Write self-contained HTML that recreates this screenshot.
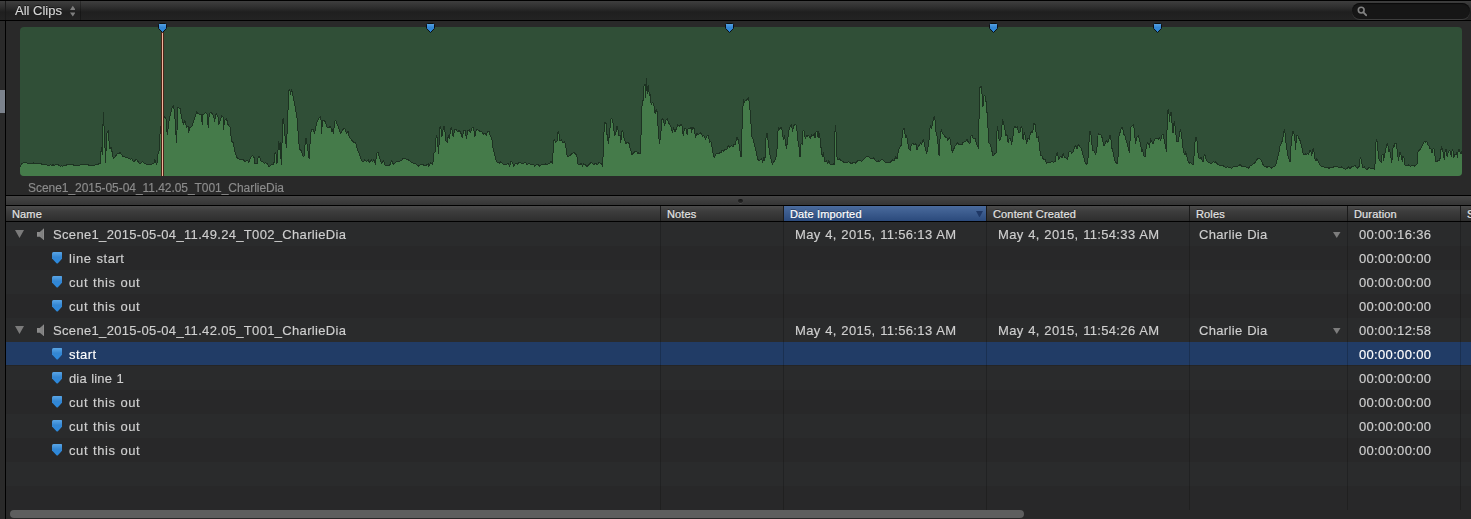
<!DOCTYPE html>
<html lang="en">
<head>
<meta charset="utf-8">
<title>All Clips</title>
<style>
html,body{margin:0;padding:0;background:#262626;}
body{width:1471px;height:519px;overflow:hidden;font-family:"Liberation Sans",sans-serif;}
#app{position:relative;width:1471px;height:519px;overflow:hidden;background:#262626;}
#app div, #app span, #app svg{position:absolute;box-sizing:border-box;}
#topbar{left:0;top:0;width:1471px;height:21px;background:#000;}
#tb-grad{left:0;top:1px;width:1471px;height:19px;background:linear-gradient(#3e3e3e 0%,#313131 28%,#232323 52%,#1f1f1f 58%,#232323 100%);}
#tb-left{left:5px;top:1px;width:1px;height:19px;background:#1a1a1a;}
#filter{left:6px;top:1px;width:75px;height:19px;border-right:1px solid rgba(0,0,0,.28);}
#filter-label{left:9px;top:2px;will-change:transform;-webkit-text-stroke:0.15px #d6d6d6;font-size:13px;line-height:15px;color:#d6d6d6;white-space:nowrap;text-shadow:0 -1px 0 rgba(0,0,0,.6);}
#updown{left:63.7px;top:4px;}
#search{left:1352px;top:3px;width:118px;height:16px;border-radius:8px;background:#161616;box-shadow:0 1px 0 rgba(255,255,255,.12), inset 0 1px 1px rgba(0,0,0,.6);}
#search svg{left:5px;top:3px;}
#leftstrip{left:0;top:21px;width:6px;height:498px;background:#2a2a2a;border-right:1px solid #000;}
#leftthumb{left:0;top:69px;width:5px;height:23px;background:#7b828c;}
#filmstrip{left:0;top:21px;width:1471px;height:174px;background:#292929;}
#clip{left:20px;top:6px;width:1442px;height:149px;background:#304f37;border-radius:4px;overflow:hidden;}
#clip svg{left:0;top:0;}
#playhead{left:161px;top:10px;width:3px;height:145px;background:#f2b39c;border-left:1px solid #4a2618;border-right:1px solid #4a2618;}
#cliplabel{will-change:transform;left:28px;top:160px;font-size:12px;line-height:14px;color:#8c8c8c;-webkit-text-stroke:0.15px #8c8c8c;white-space:nowrap;letter-spacing:-0.05px;}
.tm{top:2px;}
#splitter{left:6px;top:195px;width:1465px;height:11px;background:linear-gradient(#464646,#353535);border-top:1px solid #000;border-bottom:1px solid #000;}
#grip{left:732px;top:2.5px;width:4.6px;height:4.6px;border-radius:50%;background:linear-gradient(#141414,#2a2a2a);box-shadow:0 0.5px 0 rgba(255,255,255,.18);}
#header{left:0;top:206px;width:1471px;height:16px;background:linear-gradient(#4b4b4b 0%,#3d3d3d 35%,#2e2e2e 100%);border-bottom:1px solid #000;}
#header .hc{top:0;height:15px;border-left:1px solid #1b1b1b;}
#header .hc span{left:6px;top:2px;font-size:11px;line-height:13px;color:#e4e4e4;white-space:nowrap;text-shadow:0 -1px 0 rgba(0,0,0,.35);letter-spacing:0.15px;-webkit-text-stroke:0.2px #e4e4e4;}
#header .hsel{background:linear-gradient(#4a6b9d,#2b4a7c);}
#header .hsel span{color:#fff;-webkit-text-stroke-color:#fff;}
#sort{left:192px;top:4.5px;}
#list{left:0;top:222px;width:1471px;height:288px;}
.row{left:0;width:1471px;height:24px;}
.row.even{background:#2a2b2c;}
.row.odd{background:#282829;}
.row.sel{background:linear-gradient(#213c66,#213c66) no-repeat 0 0/100% 23px, #252525;}
.row span{top:5px;font-size:13px;line-height:16px;color:#cfcfcf;white-space:nowrap;letter-spacing:0.33px;word-spacing:0.7px;will-change:transform;-webkit-text-stroke:0.15px #cfcfcf;}
.row.sel span{color:#fff;-webkit-text-stroke-color:#fff;}
.tri{left:15px;top:8px;}
.spk{left:36.8px;top:5.7px;}
.mk{left:51.8px;top:6px;}
.clipnm{left:53px;}
.marknm{left:69.4px;}
.row .date{left:795px;}
.row .created{left:998px;}
.row .role{left:1199px;}
.row .dur{left:1359px;}
.dd{left:1333px;top:10px;width:7.5px;height:6px;}
.vl{top:0;width:1px;height:288px;background:rgba(0,0,0,.2);}
#hscroll{left:6px;top:510px;width:1465px;height:9px;background:#282828;}
#hthumb{left:4px;top:0;width:1014px;height:8px;border-radius:4px;background:#5e5e5e;}

</style>
</head>
<body>
<svg width="0" height="0" style="position:absolute"><defs>
<linearGradient id="mkg" x1="0" y1="0" x2="0" y2="1"><stop offset="0" stop-color="#5aa6e6"/><stop offset="0.45" stop-color="#3486d2"/><stop offset="1" stop-color="#2a8ae0"/></linearGradient>
<linearGradient id="spg" x1="0" y1="0" x2="1" y2="0"><stop offset="0" stop-color="#8e8e8e"/><stop offset="0.8" stop-color="#7e7e7e"/><stop offset="1" stop-color="#a0a0a0"/></linearGradient>
</defs></svg>
<div id="app">
  <div id="topbar">
    <div id="tb-grad"></div>
    <div id="tb-left"></div>
    <div id="filter"><span id="filter-label">All Clips</span>
      <svg id="updown" width="5.6" height="12" viewBox="0 0 5.6 12"><path d="M2.8 0.8 L5.6 5 H0 Z M0 7.4 H5.6 L2.8 11.6 Z" fill="#7e7e7e"/></svg>
    </div>
    <div id="search">
      <svg width="11" height="11" viewBox="0 0 11 11"><circle cx="4.2" cy="4.1" r="2.9" fill="none" stroke="#828282" stroke-width="1.6"/><path d="M6.4 6.4 L9.1 9.2" stroke="#828282" stroke-width="1.9" stroke-linecap="round"/></svg>
    </div>
  </div>
    <div id="filmstrip">
    <div id="clip">
<svg id="wave" width="1442" height="149" viewBox="0 0 1442 149"><path d="M0 149 L0 139.6 L0.0 139.6 L1.5 136.7 L3.0 135.9 L4.4 135.2 L5.8 135.1 L7.7 136.7 L8.9 136.9 L10.0 136.1 L11.2 136.7 L12.3 136.5 L13.5 136.0 L14.6 136.7 L15.8 136.0 L17.0 136.6 L18.1 136.1 L19.3 136.7 L20.4 136.4 L21.6 137.1 L22.7 137.9 L23.9 137.2 L25.0 138.0 L26.2 137.6 L27.3 138.2 L28.4 138.6 L29.5 138.1 L30.7 137.9 L31.8 138.7 L32.9 137.4 L34.0 138.5 L35.2 137.7 L36.3 137.5 L37.4 137.5 L38.5 138.0 L40.5 139.2 L41.6 138.7 L42.7 139.2 L43.8 138.1 L44.9 138.4 L46.0 138.3 L47.1 137.7 L48.2 137.6 L49.4 137.8 L50.6 137.3 L51.8 137.4 L53.0 137.7 L54.2 138.5 L55.4 138.3 L56.6 138.2 L57.8 138.6 L59.0 138.4 L60.1 138.0 L61.3 137.5 L62.4 137.9 L63.6 137.2 L64.8 137.7 L66.0 137.2 L67.2 137.8 L68.4 137.9 L69.6 138.5 L70.8 138.4 L72.0 138.0 L73.2 138.4 L74.4 138.7 L75.5 137.2 L76.7 137.2 L77.8 137.4 L79.0 136.7 L80.2 136.7 L81.3 120.3 L82.5 128.0 L83.2 85.6 L84.8 112.6 L85.4 135.7 L87.1 104.9 L88.2 103.5 L89.6 121.3 L91.3 120.7 L93.4 131.9 L96.3 128.0 L97.6 126.7 L98.9 126.3 L100.2 125.5 L103.1 129.9 L104.3 129.5 L105.5 130.6 L106.7 131.0 L107.9 130.9 L109.2 131.3 L110.5 132.1 L111.8 131.9 L113.7 134.7 L115.1 133.3 L116.6 132.4 L119.5 136.7 L120.9 136.0 L122.4 134.7 L123.6 135.6 L124.8 136.3 L126.0 136.8 L127.2 137.6 L128.3 137.9 L129.4 137.9 L130.5 137.1 L131.7 137.2 L132.8 136.2 L133.9 136.7 L134.9 132.8 L136.8 137.6 L138.3 125.1 L139.3 123.2 L140.3 100.1 L141.2 99.5 L144.5 89.5 L145.9 90.4 L147.2 107.8 L149.3 92.4 L152.2 79.8 L153.6 78.9 L154.7 87.5 L156.5 115.5 L158.0 79.8 L159.2 81.1 L160.3 81.8 L161.5 90.4 L163.4 97.2 L164.9 93.3 L166.5 100.1 L168.0 99.1 L168.8 105.3 L169.6 100.1 L170.7 100.0 L171.9 99.5 L174.4 91.4 L176.9 84.6 L178.0 86.5 L179.2 87.0 L181.1 87.5 L182.3 97.2 L183.0 87.5 L184.2 86.8 L185.4 85.2 L187.3 87.5 L188.2 101.0 L189.2 87.5 L190.8 85.2 L192.2 86.6 L193.6 88.5 L194.6 94.3 L196.1 86.6 L198.1 90.4 L198.8 97.2 L200.0 94.3 L201.9 88.5 L203.1 90.4 L203.5 102.9 L204.6 93.3 L206.7 91.8 L207.7 97.2 L210.0 100.1 L211.6 114.5 L213.1 115.5 L215.4 127.0 L217.7 131.9 L218.9 132.0 L220.0 132.7 L221.2 132.8 L223.1 132.2 L225.0 134.7 L227.0 132.8 L228.9 135.3 L230.4 130.9 L232.4 128.4 L233.9 129.5 L234.7 136.7 L235.8 136.0 L237.0 136.7 L238.2 129.5 L239.7 129.9 L240.8 133.8 L242.0 134.5 L243.2 134.9 L244.3 136.1 L245.8 135.8 L247.2 136.7 L249.1 139.9 L250.4 138.2 L251.6 137.6 L252.8 137.5 L253.9 136.7 L255.1 125.1 L255.9 126.1 L257.0 136.7 L258.6 114.5 L259.3 122.2 L260.1 115.5 L261.3 137.6 L262.8 92.4 L263.6 91.4 L264.7 106.8 L266.5 120.3 L267.8 87.5 L269.0 63.5 L269.7 62.5 L270.7 67.3 L271.5 62.5 L272.4 65.4 L275.1 79.8 L277.1 91.4 L279.4 122.2 L280.9 123.2 L282.9 129.0 L284.4 129.0 L285.4 111.6 L286.3 111.0 L287.7 122.2 L289.2 131.9 L290.6 106.8 L291.7 102.0 L293.3 102.0 L294.4 106.8 L296.3 97.2 L298.3 91.8 L300.2 89.5 L301.0 92.4 L301.5 106.8 L302.5 93.7 L303.8 93.5 L305.0 94.3 L307.1 100.1 L308.9 100.6 L310.6 99.1 L311.8 104.9 L312.5 102.9 L313.3 106.8 L314.8 94.3 L316.0 93.7 L317.9 99.1 L320.6 106.8 L323.3 102.0 L324.9 101.4 L326.4 106.8 L327.9 103.9 L329.5 110.7 L330.6 111.6 L331.8 113.1 L332.9 114.5 L334.3 115.5 L335.6 115.5 L337.2 122.2 L339.1 126.1 L341.6 133.8 L343.5 134.7 L344.9 132.8 L346.4 134.7 L348.4 132.8 L349.5 135.7 L351.3 132.8 L352.6 134.7 L353.6 132.2 L355.3 137.2 L356.8 126.1 L358.0 125.1 L359.5 130.9 L361.5 136.7 L363.4 133.4 L365.3 138.6 L366.7 138.0 L368.1 138.5 L369.6 138.6 L371.5 133.4 L373.4 137.2 L374.9 136.1 L376.3 134.7 L378.2 134.7 L379.4 134.6 L380.5 133.9 L381.7 133.3 L382.9 131.8 L384.0 131.5 L385.5 131.7 L386.9 132.2 L388.3 132.8 L389.8 133.8 L391.2 135.3 L392.7 135.7 L393.8 136.8 L395.0 136.7 L396.5 137.4 L398.1 139.2 L400.0 138.0 L401.2 137.7 L402.3 137.9 L403.5 138.0 L404.6 138.5 L405.8 138.6 L406.9 137.8 L408.1 136.7 L408.7 139.6 L410.6 135.3 L412.7 138.0 L413.9 126.1 L415.0 125.1 L416.2 108.7 L417.3 110.7 L418.5 127.0 L420.0 100.1 L420.8 99.5 L421.8 109.7 L423.5 100.1 L424.5 99.5 L425.8 113.5 L427.4 115.5 L428.1 108.7 L429.3 111.6 L430.8 101.4 L431.6 101.0 L433.1 109.7 L434.7 102.9 L436.2 102.6 L437.8 104.9 L439.3 103.3 L440.8 105.8 L442.4 110.7 L443.5 103.9 L445.1 103.3 L446.4 111.6 L447.8 103.9 L449.3 102.9 L450.5 105.8 L452.0 100.6 L453.6 101.0 L454.9 109.7 L456.3 102.0 L457.8 102.9 L459.0 103.6 L460.1 104.9 L461.7 104.9 L463.6 107.2 L465.1 106.4 L466.3 108.7 L467.4 104.9 L469.0 104.5 L470.5 109.1 L471.7 110.7 L472.8 120.3 L474.4 126.1 L475.9 132.8 L477.5 135.7 L479.4 136.1 L480.9 134.7 L482.9 136.7 L484.8 138.0 L486.7 137.2 L488.6 136.7 L489.6 139.6 L490.9 134.7 L492.5 135.3 L493.8 139.2 L495.4 136.1 L497.3 137.2 L498.7 135.8 L500.2 135.7 L501.6 136.4 L503.1 137.2 L505.0 134.7 L506.9 137.6 L508.9 136.7 L510.3 137.2 L511.8 138.0 L513.7 137.2 L514.8 139.6 L516.4 137.2 L518.5 137.6 L519.5 139.6 L521.4 137.2 L523.3 138.0 L525.2 136.9 L527.2 138.0 L528.7 136.1 L529.9 136.7 L531.0 133.8 L532.6 136.7 L533.5 114.5 L534.5 112.6 L535.6 115.5 L537.2 113.5 L538.0 104.9 L538.7 104.5 L539.9 113.5 L541.4 112.6 L543.0 115.5 L544.5 114.9 L545.7 118.4 L547.2 129.9 L549.3 129.0 L550.7 128.0 L552.2 126.5 L554.1 125.7 L556.1 127.6 L557.0 129.9 L558.0 137.2 L559.9 138.0 L561.1 136.1 L562.6 139.2 L563.8 136.7 L565.3 137.6 L566.9 139.9 L569.6 136.7 L571.5 135.3 L573.4 137.6 L574.6 137.0 L575.7 136.1 L577.3 137.6 L579.2 135.3 L581.1 136.7 L582.7 139.2 L583.8 106.8 L585.0 94.9 L585.9 95.2 L587.3 110.7 L588.4 116.4 L589.6 104.9 L590.8 92.4 L591.9 91.4 L593.1 96.2 L594.6 108.7 L595.8 106.8 L596.9 99.5 L597.7 100.1 L598.8 108.7 L600.0 107.8 L600.8 115.5 L601.9 103.9 L602.7 103.3 L603.9 110.7 L605.8 116.4 L607.3 115.5 L608.9 116.1 L610.4 122.2 L611.9 127.6 L613.5 126.1 L615.4 124.1 L617.0 125.1 L617.7 127.0 L618.9 125.7 L620.4 127.0 L621.2 102.9 L622.2 73.1 L623.1 74.0 L624.1 57.7 L625.0 57.1 L625.8 70.2 L626.4 51.9 L627.2 60.6 L627.6 66.3 L628.5 59.0 L629.3 68.3 L630.1 67.3 L631.2 77.9 L632.4 75.0 L633.9 77.9 L635.1 86.6 L636.2 82.1 L637.4 85.6 L638.5 108.7 L639.7 116.1 L640.8 106.8 L642.0 92.4 L642.8 91.4 L644.7 98.1 L646.2 92.4 L647.4 91.8 L648.9 96.2 L650.9 99.5 L652.4 105.8 L653.6 100.6 L655.1 104.9 L656.6 101.0 L657.8 97.6 L659.3 99.5 L660.9 97.2 L662.0 98.7 L663.2 108.3 L664.4 102.0 L665.9 101.0 L667.1 107.8 L668.2 101.0 L669.7 101.4 L671.3 100.6 L671.7 105.8 L672.4 100.1 L674.4 102.0 L675.5 111.0 L676.7 106.4 L678.2 107.8 L679.8 106.4 L680.9 105.8 L682.5 109.1 L684.0 108.7 L685.5 112.6 L687.1 108.7 L688.2 108.3 L689.8 115.5 L690.9 114.1 L692.1 120.3 L693.3 128.0 L694.4 130.9 L696.0 127.0 L697.5 126.1 L698.7 127.0 L699.8 125.1 L701.0 126.1 L702.1 123.2 L703.7 124.1 L705.2 122.2 L706.7 122.6 L708.3 118.7 L709.8 120.3 L711.4 118.7 L712.9 119.9 L714.1 117.4 L715.2 118.0 L716.8 110.7 L717.5 110.3 L718.7 115.5 L719.8 122.2 L721.0 130.3 L722.2 97.2 L723.3 72.1 L724.5 75.0 L725.2 73.1 L726.4 74.0 L727.6 71.2 L728.7 70.6 L729.9 81.8 L731.0 97.2 L731.8 109.7 L732.9 111.6 L734.5 117.4 L736.0 124.1 L737.6 132.2 L739.1 133.8 L740.7 132.2 L741.8 131.5 L742.6 135.7 L743.7 130.9 L744.9 133.4 L745.7 114.5 L746.4 106.4 L747.2 106.8 L748.4 115.5 L749.5 126.1 L751.1 132.2 L752.2 137.2 L753.8 134.7 L755.3 132.8 L756.8 127.0 L757.6 106.8 L758.4 100.6 L759.5 102.0 L761.1 100.6 L762.2 103.9 L763.4 112.6 L764.5 108.7 L765.7 117.4 L766.5 121.8 L767.6 112.6 L769.2 102.0 L770.3 99.5 L771.5 97.2 L772.6 104.9 L773.4 99.1 L775.0 97.6 L776.5 98.1 L777.6 111.6 L778.8 118.4 L780.0 129.9 L781.1 116.4 L782.3 117.4 L783.0 103.9 L783.8 103.3 L785.0 109.7 L785.7 111.6 L786.5 108.3 L787.7 109.2 L788.8 108.7 L790.4 111.6 L791.5 107.8 L793.1 108.7 L794.2 106.8 L795.0 111.0 L796.1 104.5 L797.3 104.9 L798.1 110.3 L798.8 104.9 L800.0 110.7 L801.2 122.2 L802.3 129.9 L803.5 125.1 L804.6 134.7 L806.2 133.8 L807.7 136.1 L808.9 133.8 L810.0 137.2 L811.6 138.0 L813.1 136.7 L814.3 137.6 L814.8 106.8 L815.4 98.7 L816.2 106.8 L817.0 129.9 L818.1 132.8 L819.3 131.9 L821.2 133.8 L823.1 134.7 L825.0 136.1 L827.0 135.3 L828.9 134.7 L830.8 136.1 L832.0 136.2 L833.1 135.7 L834.3 135.9 L835.5 136.1 L836.6 135.1 L837.8 133.8 L839.7 133.4 L841.6 134.2 L843.5 132.2 L844.7 131.3 L845.9 129.9 L847.8 129.0 L849.7 130.9 L851.6 131.9 L853.6 130.9 L855.1 132.8 L856.6 134.7 L858.2 133.8 L859.7 134.7 L860.9 132.9 L862.0 132.2 L864.0 133.8 L865.1 135.1 L866.3 135.3 L867.4 135.7 L868.6 135.3 L869.7 135.6 L870.9 134.7 L872.8 132.8 L874.4 133.4 L875.5 129.9 L877.1 131.9 L878.2 125.1 L879.4 120.3 L880.9 119.3 L882.1 110.7 L883.2 101.0 L884.4 102.0 L885.5 110.3 L886.7 108.7 L887.9 116.4 L889.0 122.2 L890.2 123.2 L891.3 117.4 L892.9 116.8 L894.4 117.4 L896.0 116.8 L897.1 123.2 L898.3 119.3 L899.4 118.4 L900.6 115.5 L901.7 117.4 L903.3 112.2 L904.4 116.4 L905.6 123.2 L906.7 126.5 L907.9 120.3 L909.1 112.6 L910.2 98.7 L911.4 102.0 L912.5 97.2 L913.7 90.4 L914.8 89.5 L915.6 102.9 L916.8 107.8 L917.9 115.5 L919.1 129.0 L920.2 108.7 L921.4 102.0 L922.5 106.8 L924.1 107.8 L925.6 110.7 L926.8 110.3 L927.9 113.5 L929.1 110.7 L930.3 112.6 L931.4 121.3 L932.6 125.7 L933.7 122.2 L934.9 119.3 L936.4 117.4 L937.6 115.5 L938.7 118.0 L940.3 117.4 L941.8 118.0 L943.0 115.5 L944.5 114.9 L946.1 114.1 L947.2 112.2 L948.4 115.5 L949.9 116.4 L951.1 108.3 L952.2 108.7 L953.4 111.6 L954.9 111.0 L956.1 115.5 L957.2 118.4 L958.4 121.3 L959.2 83.7 L959.9 60.6 L961.1 59.6 L961.8 64.4 L963.0 79.8 L963.8 69.2 L964.9 68.3 L966.1 75.0 L966.9 85.6 L967.6 85.2 L968.4 115.5 L969.9 116.4 L971.5 122.2 L973.0 129.0 L974.6 127.0 L976.1 126.1 L976.9 104.9 L977.6 99.5 L978.4 106.8 L979.2 113.5 L980.7 112.6 L981.5 106.8 L982.3 92.9 L983.4 95.2 L984.6 100.1 L985.7 108.7 L986.9 107.8 L988.1 115.5 L989.2 111.0 L990.8 112.2 L991.5 117.4 L992.7 111.6 L993.8 101.0 L995.0 99.5 L996.1 100.6 L997.3 99.5 L998.5 105.8 L1000.0 104.9 L1001.2 99.1 L1001.9 99.5 L1003.1 112.6 L1004.2 105.8 L1005.4 108.7 L1006.6 116.4 L1007.7 111.6 L1009.2 112.2 L1010.4 105.8 L1011.6 104.9 L1012.7 105.8 L1013.9 96.8 L1015.0 97.2 L1016.2 106.8 L1017.0 110.7 L1018.1 109.7 L1019.3 116.4 L1020.4 128.0 L1022.0 129.0 L1023.5 132.8 L1025.0 132.2 L1026.6 136.1 L1028.5 135.3 L1030.4 135.7 L1032.0 134.2 L1033.5 135.3 L1035.1 134.7 L1036.2 128.0 L1037.4 125.1 L1038.5 132.2 L1039.7 130.9 L1040.8 129.0 L1042.0 130.9 L1043.2 126.5 L1044.3 129.9 L1045.9 130.9 L1047.4 132.8 L1048.9 125.1 L1050.1 124.1 L1051.6 126.1 L1053.2 125.1 L1054.7 119.9 L1055.9 118.4 L1057.0 121.8 L1058.2 117.4 L1059.7 119.3 L1061.3 121.8 L1062.8 127.0 L1064.4 132.8 L1065.9 137.2 L1067.4 136.7 L1068.6 126.1 L1069.4 104.9 L1070.5 104.5 L1071.7 112.6 L1072.4 123.2 L1074.0 124.1 L1075.5 127.0 L1076.7 124.1 L1077.5 114.5 L1078.2 106.4 L1079.4 107.2 L1080.9 107.8 L1082.1 110.7 L1083.2 115.5 L1084.0 119.3 L1085.2 116.4 L1086.3 113.5 L1087.5 115.5 L1088.6 113.5 L1089.8 108.7 L1090.6 108.3 L1091.7 120.3 L1093.3 126.1 L1094.8 133.8 L1096.3 135.7 L1097.5 136.7 L1098.3 126.1 L1099.0 108.7 L1100.2 104.9 L1101.3 100.6 L1102.5 100.1 L1103.7 106.8 L1105.2 109.7 L1106.4 114.5 L1107.9 119.3 L1109.4 125.1 L1110.2 110.7 L1111.0 100.1 L1112.5 98.1 L1113.7 97.6 L1114.8 108.7 L1115.6 116.4 L1116.8 110.7 L1118.3 108.3 L1119.5 112.6 L1120.6 117.4 L1121.8 124.1 L1122.5 122.2 L1123.7 129.0 L1125.2 129.5 L1126.4 118.4 L1127.6 115.5 L1128.7 116.4 L1129.5 120.3 L1130.6 111.6 L1131.8 114.5 L1132.9 116.8 L1134.1 113.5 L1135.6 111.0 L1137.2 111.0 L1138.3 112.2 L1139.5 111.0 L1140.7 113.5 L1141.8 108.3 L1143.0 107.2 L1144.1 112.6 L1145.3 118.4 L1146.4 124.1 L1147.2 97.2 L1148.0 83.3 L1148.7 82.7 L1149.5 94.3 L1150.3 85.6 L1151.4 85.2 L1152.2 99.1 L1153.0 105.8 L1153.8 96.2 L1154.5 94.3 L1155.7 104.9 L1156.8 114.9 L1158.4 114.5 L1159.5 106.8 L1160.3 102.9 L1161.5 106.8 L1162.6 118.4 L1163.8 125.1 L1164.9 128.0 L1165.7 124.5 L1166.9 129.9 L1168.0 133.8 L1169.6 136.7 L1170.7 135.3 L1171.9 137.2 L1173.4 138.0 L1174.2 126.1 L1175.3 111.0 L1176.5 110.3 L1177.3 116.4 L1178.4 130.9 L1180.0 131.5 L1181.1 129.9 L1182.3 133.8 L1183.4 134.7 L1184.2 127.0 L1185.0 127.6 L1186.1 132.8 L1187.7 134.7 L1189.6 135.7 L1191.5 136.7 L1193.4 134.7 L1194.6 135.7 L1195.8 134.7 L1196.9 136.7 L1198.5 137.6 L1200.0 139.2 L1201.9 138.0 L1203.9 139.2 L1205.8 140.5 L1207.7 139.9 L1209.6 140.5 L1211.6 141.1 L1213.5 139.6 L1215.4 139.9 L1216.6 140.0 L1217.7 139.2 L1218.9 138.3 L1220.0 137.6 L1222.0 139.6 L1223.1 139.6 L1224.3 139.9 L1225.4 139.7 L1226.6 140.5 L1228.5 141.1 L1230.4 138.6 L1231.6 138.1 L1232.8 137.2 L1234.7 136.1 L1236.2 133.4 L1237.8 131.9 L1239.3 131.5 L1241.2 133.4 L1242.8 137.2 L1244.7 139.6 L1245.9 139.4 L1247.0 140.5 L1248.2 139.4 L1249.3 139.6 L1251.3 141.1 L1252.4 140.1 L1253.6 139.9 L1255.5 138.6 L1256.6 134.7 L1257.8 129.9 L1259.0 125.1 L1260.1 118.4 L1261.3 116.4 L1262.4 113.5 L1263.6 105.8 L1264.4 102.9 L1265.1 106.8 L1265.9 115.5 L1267.1 123.2 L1268.2 129.9 L1269.4 132.8 L1270.1 134.7 L1270.9 120.3 L1271.7 110.7 L1272.8 104.9 L1273.6 104.5 L1274.8 110.7 L1275.5 122.2 L1276.7 108.7 L1277.8 108.3 L1279.0 111.6 L1280.5 114.5 L1281.7 119.3 L1282.9 126.1 L1284.0 128.0 L1285.2 126.5 L1286.3 127.6 L1287.5 126.5 L1288.6 127.6 L1289.8 123.8 L1290.6 123.2 L1291.7 129.0 L1292.9 122.2 L1293.6 121.8 L1294.8 131.9 L1296.0 133.8 L1296.7 131.5 L1298.3 134.7 L1299.8 137.6 L1301.3 139.2 L1303.3 139.6 L1305.2 140.5 L1307.1 139.9 L1309.1 141.5 L1311.0 139.9 L1312.9 140.5 L1314.1 139.6 L1315.2 139.6 L1316.4 139.5 L1317.5 139.9 L1319.5 140.5 L1321.4 139.9 L1323.3 141.1 L1324.5 141.1 L1325.6 142.4 L1327.6 141.1 L1328.7 139.6 L1329.9 141.5 L1331.8 139.9 L1333.7 139.2 L1334.9 138.0 L1336.0 139.9 L1337.6 141.1 L1339.1 139.6 L1339.9 131.9 L1340.7 130.3 L1341.4 133.8 L1342.6 140.5 L1344.5 139.9 L1345.7 141.9 L1347.2 142.4 L1348.7 140.5 L1350.7 141.1 L1352.6 141.5 L1354.5 142.4 L1355.3 133.8 L1356.1 112.6 L1356.8 112.2 L1357.6 120.3 L1358.8 131.9 L1359.9 133.8 L1361.1 135.3 L1361.8 128.0 L1363.0 127.0 L1363.8 133.8 L1364.5 126.1 L1365.3 125.7 L1366.1 120.3 L1366.9 117.4 L1367.6 116.8 L1368.8 124.1 L1369.6 122.2 L1370.7 129.9 L1371.9 135.3 L1372.6 124.1 L1373.4 118.4 L1374.2 119.3 L1375.0 116.4 L1376.1 116.1 L1377.3 124.1 L1378.4 133.8 L1379.6 126.1 L1380.3 125.1 L1381.5 129.9 L1382.3 134.7 L1383.0 129.5 L1383.8 129.0 L1384.6 137.6 L1386.5 138.6 L1388.4 138.0 L1390.4 139.2 L1392.3 138.6 L1394.2 139.2 L1396.1 138.0 L1397.3 136.7 L1398.1 124.1 L1398.8 123.2 L1399.4 123.2 L1400.9 121.3 L1402.4 118.4 L1403.6 115.5 L1404.8 114.5 L1405.9 115.5 L1406.7 114.1 L1407.8 117.4 L1409.0 119.3 L1410.2 121.8 L1411.3 122.2 L1412.1 126.1 L1412.8 122.2 L1414.0 121.8 L1414.8 128.0 L1415.9 134.7 L1417.9 133.8 L1419.8 133.4 L1420.6 126.1 L1421.3 119.9 L1422.5 121.3 L1423.6 129.0 L1424.4 132.8 L1425.2 123.2 L1426.0 122.2 L1427.1 129.9 L1428.3 125.1 L1429.4 123.2 L1430.6 125.1 L1431.3 129.9 L1432.1 123.2 L1432.9 122.6 L1433.7 130.9 L1434.8 127.0 L1436.0 128.0 L1436.7 125.1 L1437.5 130.9 L1438.3 122.2 L1439.1 121.8 L1440.2 126.1 L1441.0 127.0 L1442.1 124.1 L1442 124.1 L1442 149 Z" fill="#457b4a"/><path d="M0.0 139.6 L1.5 136.7 L3.0 135.9 L4.4 135.2 L5.8 135.1 L7.7 136.7 L8.9 136.9 L10.0 136.1 L11.2 136.7 L12.3 136.5 L13.5 136.0 L14.6 136.7 L15.8 136.0 L17.0 136.6 L18.1 136.1 L19.3 136.7 L20.4 136.4 L21.6 137.1 L22.7 137.9 L23.9 137.2 L25.0 138.0 L26.2 137.6 L27.3 138.2 L28.4 138.6 L29.5 138.1 L30.7 137.9 L31.8 138.7 L32.9 137.4 L34.0 138.5 L35.2 137.7 L36.3 137.5 L37.4 137.5 L38.5 138.0 L40.5 139.2 L41.6 138.7 L42.7 139.2 L43.8 138.1 L44.9 138.4 L46.0 138.3 L47.1 137.7 L48.2 137.6 L49.4 137.8 L50.6 137.3 L51.8 137.4 L53.0 137.7 L54.2 138.5 L55.4 138.3 L56.6 138.2 L57.8 138.6 L59.0 138.4 L60.1 138.0 L61.3 137.5 L62.4 137.9 L63.6 137.2 L64.8 137.7 L66.0 137.2 L67.2 137.8 L68.4 137.9 L69.6 138.5 L70.8 138.4 L72.0 138.0 L73.2 138.4 L74.4 138.7 L75.5 137.2 L76.7 137.2 L77.8 137.4 L79.0 136.7 L80.2 136.7 L81.3 120.3 L82.5 128.0 L83.2 85.6 L84.8 112.6 L85.4 135.7 L87.1 104.9 L88.2 103.5 L89.6 121.3 L91.3 120.7 L93.4 131.9 L96.3 128.0 L97.6 126.7 L98.9 126.3 L100.2 125.5 L103.1 129.9 L104.3 129.5 L105.5 130.6 L106.7 131.0 L107.9 130.9 L109.2 131.3 L110.5 132.1 L111.8 131.9 L113.7 134.7 L115.1 133.3 L116.6 132.4 L119.5 136.7 L120.9 136.0 L122.4 134.7 L123.6 135.6 L124.8 136.3 L126.0 136.8 L127.2 137.6 L128.3 137.9 L129.4 137.9 L130.5 137.1 L131.7 137.2 L132.8 136.2 L133.9 136.7 L134.9 132.8 L136.8 137.6 L138.3 125.1 L139.3 123.2 L140.3 100.1 L141.2 99.5 L144.5 89.5 L145.9 90.4 L147.2 107.8 L149.3 92.4 L152.2 79.8 L153.6 78.9 L154.7 87.5 L156.5 115.5 L158.0 79.8 L159.2 81.1 L160.3 81.8 L161.5 90.4 L163.4 97.2 L164.9 93.3 L166.5 100.1 L168.0 99.1 L168.8 105.3 L169.6 100.1 L170.7 100.0 L171.9 99.5 L174.4 91.4 L176.9 84.6 L178.0 86.5 L179.2 87.0 L181.1 87.5 L182.3 97.2 L183.0 87.5 L184.2 86.8 L185.4 85.2 L187.3 87.5 L188.2 101.0 L189.2 87.5 L190.8 85.2 L192.2 86.6 L193.6 88.5 L194.6 94.3 L196.1 86.6 L198.1 90.4 L198.8 97.2 L200.0 94.3 L201.9 88.5 L203.1 90.4 L203.5 102.9 L204.6 93.3 L206.7 91.8 L207.7 97.2 L210.0 100.1 L211.6 114.5 L213.1 115.5 L215.4 127.0 L217.7 131.9 L218.9 132.0 L220.0 132.7 L221.2 132.8 L223.1 132.2 L225.0 134.7 L227.0 132.8 L228.9 135.3 L230.4 130.9 L232.4 128.4 L233.9 129.5 L234.7 136.7 L235.8 136.0 L237.0 136.7 L238.2 129.5 L239.7 129.9 L240.8 133.8 L242.0 134.5 L243.2 134.9 L244.3 136.1 L245.8 135.8 L247.2 136.7 L249.1 139.9 L250.4 138.2 L251.6 137.6 L252.8 137.5 L253.9 136.7 L255.1 125.1 L255.9 126.1 L257.0 136.7 L258.6 114.5 L259.3 122.2 L260.1 115.5 L261.3 137.6 L262.8 92.4 L263.6 91.4 L264.7 106.8 L266.5 120.3 L267.8 87.5 L269.0 63.5 L269.7 62.5 L270.7 67.3 L271.5 62.5 L272.4 65.4 L275.1 79.8 L277.1 91.4 L279.4 122.2 L280.9 123.2 L282.9 129.0 L284.4 129.0 L285.4 111.6 L286.3 111.0 L287.7 122.2 L289.2 131.9 L290.6 106.8 L291.7 102.0 L293.3 102.0 L294.4 106.8 L296.3 97.2 L298.3 91.8 L300.2 89.5 L301.0 92.4 L301.5 106.8 L302.5 93.7 L303.8 93.5 L305.0 94.3 L307.1 100.1 L308.9 100.6 L310.6 99.1 L311.8 104.9 L312.5 102.9 L313.3 106.8 L314.8 94.3 L316.0 93.7 L317.9 99.1 L320.6 106.8 L323.3 102.0 L324.9 101.4 L326.4 106.8 L327.9 103.9 L329.5 110.7 L330.6 111.6 L331.8 113.1 L332.9 114.5 L334.3 115.5 L335.6 115.5 L337.2 122.2 L339.1 126.1 L341.6 133.8 L343.5 134.7 L344.9 132.8 L346.4 134.7 L348.4 132.8 L349.5 135.7 L351.3 132.8 L352.6 134.7 L353.6 132.2 L355.3 137.2 L356.8 126.1 L358.0 125.1 L359.5 130.9 L361.5 136.7 L363.4 133.4 L365.3 138.6 L366.7 138.0 L368.1 138.5 L369.6 138.6 L371.5 133.4 L373.4 137.2 L374.9 136.1 L376.3 134.7 L378.2 134.7 L379.4 134.6 L380.5 133.9 L381.7 133.3 L382.9 131.8 L384.0 131.5 L385.5 131.7 L386.9 132.2 L388.3 132.8 L389.8 133.8 L391.2 135.3 L392.7 135.7 L393.8 136.8 L395.0 136.7 L396.5 137.4 L398.1 139.2 L400.0 138.0 L401.2 137.7 L402.3 137.9 L403.5 138.0 L404.6 138.5 L405.8 138.6 L406.9 137.8 L408.1 136.7 L408.7 139.6 L410.6 135.3 L412.7 138.0 L413.9 126.1 L415.0 125.1 L416.2 108.7 L417.3 110.7 L418.5 127.0 L420.0 100.1 L420.8 99.5 L421.8 109.7 L423.5 100.1 L424.5 99.5 L425.8 113.5 L427.4 115.5 L428.1 108.7 L429.3 111.6 L430.8 101.4 L431.6 101.0 L433.1 109.7 L434.7 102.9 L436.2 102.6 L437.8 104.9 L439.3 103.3 L440.8 105.8 L442.4 110.7 L443.5 103.9 L445.1 103.3 L446.4 111.6 L447.8 103.9 L449.3 102.9 L450.5 105.8 L452.0 100.6 L453.6 101.0 L454.9 109.7 L456.3 102.0 L457.8 102.9 L459.0 103.6 L460.1 104.9 L461.7 104.9 L463.6 107.2 L465.1 106.4 L466.3 108.7 L467.4 104.9 L469.0 104.5 L470.5 109.1 L471.7 110.7 L472.8 120.3 L474.4 126.1 L475.9 132.8 L477.5 135.7 L479.4 136.1 L480.9 134.7 L482.9 136.7 L484.8 138.0 L486.7 137.2 L488.6 136.7 L489.6 139.6 L490.9 134.7 L492.5 135.3 L493.8 139.2 L495.4 136.1 L497.3 137.2 L498.7 135.8 L500.2 135.7 L501.6 136.4 L503.1 137.2 L505.0 134.7 L506.9 137.6 L508.9 136.7 L510.3 137.2 L511.8 138.0 L513.7 137.2 L514.8 139.6 L516.4 137.2 L518.5 137.6 L519.5 139.6 L521.4 137.2 L523.3 138.0 L525.2 136.9 L527.2 138.0 L528.7 136.1 L529.9 136.7 L531.0 133.8 L532.6 136.7 L533.5 114.5 L534.5 112.6 L535.6 115.5 L537.2 113.5 L538.0 104.9 L538.7 104.5 L539.9 113.5 L541.4 112.6 L543.0 115.5 L544.5 114.9 L545.7 118.4 L547.2 129.9 L549.3 129.0 L550.7 128.0 L552.2 126.5 L554.1 125.7 L556.1 127.6 L557.0 129.9 L558.0 137.2 L559.9 138.0 L561.1 136.1 L562.6 139.2 L563.8 136.7 L565.3 137.6 L566.9 139.9 L569.6 136.7 L571.5 135.3 L573.4 137.6 L574.6 137.0 L575.7 136.1 L577.3 137.6 L579.2 135.3 L581.1 136.7 L582.7 139.2 L583.8 106.8 L585.0 94.9 L585.9 95.2 L587.3 110.7 L588.4 116.4 L589.6 104.9 L590.8 92.4 L591.9 91.4 L593.1 96.2 L594.6 108.7 L595.8 106.8 L596.9 99.5 L597.7 100.1 L598.8 108.7 L600.0 107.8 L600.8 115.5 L601.9 103.9 L602.7 103.3 L603.9 110.7 L605.8 116.4 L607.3 115.5 L608.9 116.1 L610.4 122.2 L611.9 127.6 L613.5 126.1 L615.4 124.1 L617.0 125.1 L617.7 127.0 L618.9 125.7 L620.4 127.0 L621.2 102.9 L622.2 73.1 L623.1 74.0 L624.1 57.7 L625.0 57.1 L625.8 70.2 L626.4 51.9 L627.2 60.6 L627.6 66.3 L628.5 59.0 L629.3 68.3 L630.1 67.3 L631.2 77.9 L632.4 75.0 L633.9 77.9 L635.1 86.6 L636.2 82.1 L637.4 85.6 L638.5 108.7 L639.7 116.1 L640.8 106.8 L642.0 92.4 L642.8 91.4 L644.7 98.1 L646.2 92.4 L647.4 91.8 L648.9 96.2 L650.9 99.5 L652.4 105.8 L653.6 100.6 L655.1 104.9 L656.6 101.0 L657.8 97.6 L659.3 99.5 L660.9 97.2 L662.0 98.7 L663.2 108.3 L664.4 102.0 L665.9 101.0 L667.1 107.8 L668.2 101.0 L669.7 101.4 L671.3 100.6 L671.7 105.8 L672.4 100.1 L674.4 102.0 L675.5 111.0 L676.7 106.4 L678.2 107.8 L679.8 106.4 L680.9 105.8 L682.5 109.1 L684.0 108.7 L685.5 112.6 L687.1 108.7 L688.2 108.3 L689.8 115.5 L690.9 114.1 L692.1 120.3 L693.3 128.0 L694.4 130.9 L696.0 127.0 L697.5 126.1 L698.7 127.0 L699.8 125.1 L701.0 126.1 L702.1 123.2 L703.7 124.1 L705.2 122.2 L706.7 122.6 L708.3 118.7 L709.8 120.3 L711.4 118.7 L712.9 119.9 L714.1 117.4 L715.2 118.0 L716.8 110.7 L717.5 110.3 L718.7 115.5 L719.8 122.2 L721.0 130.3 L722.2 97.2 L723.3 72.1 L724.5 75.0 L725.2 73.1 L726.4 74.0 L727.6 71.2 L728.7 70.6 L729.9 81.8 L731.0 97.2 L731.8 109.7 L732.9 111.6 L734.5 117.4 L736.0 124.1 L737.6 132.2 L739.1 133.8 L740.7 132.2 L741.8 131.5 L742.6 135.7 L743.7 130.9 L744.9 133.4 L745.7 114.5 L746.4 106.4 L747.2 106.8 L748.4 115.5 L749.5 126.1 L751.1 132.2 L752.2 137.2 L753.8 134.7 L755.3 132.8 L756.8 127.0 L757.6 106.8 L758.4 100.6 L759.5 102.0 L761.1 100.6 L762.2 103.9 L763.4 112.6 L764.5 108.7 L765.7 117.4 L766.5 121.8 L767.6 112.6 L769.2 102.0 L770.3 99.5 L771.5 97.2 L772.6 104.9 L773.4 99.1 L775.0 97.6 L776.5 98.1 L777.6 111.6 L778.8 118.4 L780.0 129.9 L781.1 116.4 L782.3 117.4 L783.0 103.9 L783.8 103.3 L785.0 109.7 L785.7 111.6 L786.5 108.3 L787.7 109.2 L788.8 108.7 L790.4 111.6 L791.5 107.8 L793.1 108.7 L794.2 106.8 L795.0 111.0 L796.1 104.5 L797.3 104.9 L798.1 110.3 L798.8 104.9 L800.0 110.7 L801.2 122.2 L802.3 129.9 L803.5 125.1 L804.6 134.7 L806.2 133.8 L807.7 136.1 L808.9 133.8 L810.0 137.2 L811.6 138.0 L813.1 136.7 L814.3 137.6 L814.8 106.8 L815.4 98.7 L816.2 106.8 L817.0 129.9 L818.1 132.8 L819.3 131.9 L821.2 133.8 L823.1 134.7 L825.0 136.1 L827.0 135.3 L828.9 134.7 L830.8 136.1 L832.0 136.2 L833.1 135.7 L834.3 135.9 L835.5 136.1 L836.6 135.1 L837.8 133.8 L839.7 133.4 L841.6 134.2 L843.5 132.2 L844.7 131.3 L845.9 129.9 L847.8 129.0 L849.7 130.9 L851.6 131.9 L853.6 130.9 L855.1 132.8 L856.6 134.7 L858.2 133.8 L859.7 134.7 L860.9 132.9 L862.0 132.2 L864.0 133.8 L865.1 135.1 L866.3 135.3 L867.4 135.7 L868.6 135.3 L869.7 135.6 L870.9 134.7 L872.8 132.8 L874.4 133.4 L875.5 129.9 L877.1 131.9 L878.2 125.1 L879.4 120.3 L880.9 119.3 L882.1 110.7 L883.2 101.0 L884.4 102.0 L885.5 110.3 L886.7 108.7 L887.9 116.4 L889.0 122.2 L890.2 123.2 L891.3 117.4 L892.9 116.8 L894.4 117.4 L896.0 116.8 L897.1 123.2 L898.3 119.3 L899.4 118.4 L900.6 115.5 L901.7 117.4 L903.3 112.2 L904.4 116.4 L905.6 123.2 L906.7 126.5 L907.9 120.3 L909.1 112.6 L910.2 98.7 L911.4 102.0 L912.5 97.2 L913.7 90.4 L914.8 89.5 L915.6 102.9 L916.8 107.8 L917.9 115.5 L919.1 129.0 L920.2 108.7 L921.4 102.0 L922.5 106.8 L924.1 107.8 L925.6 110.7 L926.8 110.3 L927.9 113.5 L929.1 110.7 L930.3 112.6 L931.4 121.3 L932.6 125.7 L933.7 122.2 L934.9 119.3 L936.4 117.4 L937.6 115.5 L938.7 118.0 L940.3 117.4 L941.8 118.0 L943.0 115.5 L944.5 114.9 L946.1 114.1 L947.2 112.2 L948.4 115.5 L949.9 116.4 L951.1 108.3 L952.2 108.7 L953.4 111.6 L954.9 111.0 L956.1 115.5 L957.2 118.4 L958.4 121.3 L959.2 83.7 L959.9 60.6 L961.1 59.6 L961.8 64.4 L963.0 79.8 L963.8 69.2 L964.9 68.3 L966.1 75.0 L966.9 85.6 L967.6 85.2 L968.4 115.5 L969.9 116.4 L971.5 122.2 L973.0 129.0 L974.6 127.0 L976.1 126.1 L976.9 104.9 L977.6 99.5 L978.4 106.8 L979.2 113.5 L980.7 112.6 L981.5 106.8 L982.3 92.9 L983.4 95.2 L984.6 100.1 L985.7 108.7 L986.9 107.8 L988.1 115.5 L989.2 111.0 L990.8 112.2 L991.5 117.4 L992.7 111.6 L993.8 101.0 L995.0 99.5 L996.1 100.6 L997.3 99.5 L998.5 105.8 L1000.0 104.9 L1001.2 99.1 L1001.9 99.5 L1003.1 112.6 L1004.2 105.8 L1005.4 108.7 L1006.6 116.4 L1007.7 111.6 L1009.2 112.2 L1010.4 105.8 L1011.6 104.9 L1012.7 105.8 L1013.9 96.8 L1015.0 97.2 L1016.2 106.8 L1017.0 110.7 L1018.1 109.7 L1019.3 116.4 L1020.4 128.0 L1022.0 129.0 L1023.5 132.8 L1025.0 132.2 L1026.6 136.1 L1028.5 135.3 L1030.4 135.7 L1032.0 134.2 L1033.5 135.3 L1035.1 134.7 L1036.2 128.0 L1037.4 125.1 L1038.5 132.2 L1039.7 130.9 L1040.8 129.0 L1042.0 130.9 L1043.2 126.5 L1044.3 129.9 L1045.9 130.9 L1047.4 132.8 L1048.9 125.1 L1050.1 124.1 L1051.6 126.1 L1053.2 125.1 L1054.7 119.9 L1055.9 118.4 L1057.0 121.8 L1058.2 117.4 L1059.7 119.3 L1061.3 121.8 L1062.8 127.0 L1064.4 132.8 L1065.9 137.2 L1067.4 136.7 L1068.6 126.1 L1069.4 104.9 L1070.5 104.5 L1071.7 112.6 L1072.4 123.2 L1074.0 124.1 L1075.5 127.0 L1076.7 124.1 L1077.5 114.5 L1078.2 106.4 L1079.4 107.2 L1080.9 107.8 L1082.1 110.7 L1083.2 115.5 L1084.0 119.3 L1085.2 116.4 L1086.3 113.5 L1087.5 115.5 L1088.6 113.5 L1089.8 108.7 L1090.6 108.3 L1091.7 120.3 L1093.3 126.1 L1094.8 133.8 L1096.3 135.7 L1097.5 136.7 L1098.3 126.1 L1099.0 108.7 L1100.2 104.9 L1101.3 100.6 L1102.5 100.1 L1103.7 106.8 L1105.2 109.7 L1106.4 114.5 L1107.9 119.3 L1109.4 125.1 L1110.2 110.7 L1111.0 100.1 L1112.5 98.1 L1113.7 97.6 L1114.8 108.7 L1115.6 116.4 L1116.8 110.7 L1118.3 108.3 L1119.5 112.6 L1120.6 117.4 L1121.8 124.1 L1122.5 122.2 L1123.7 129.0 L1125.2 129.5 L1126.4 118.4 L1127.6 115.5 L1128.7 116.4 L1129.5 120.3 L1130.6 111.6 L1131.8 114.5 L1132.9 116.8 L1134.1 113.5 L1135.6 111.0 L1137.2 111.0 L1138.3 112.2 L1139.5 111.0 L1140.7 113.5 L1141.8 108.3 L1143.0 107.2 L1144.1 112.6 L1145.3 118.4 L1146.4 124.1 L1147.2 97.2 L1148.0 83.3 L1148.7 82.7 L1149.5 94.3 L1150.3 85.6 L1151.4 85.2 L1152.2 99.1 L1153.0 105.8 L1153.8 96.2 L1154.5 94.3 L1155.7 104.9 L1156.8 114.9 L1158.4 114.5 L1159.5 106.8 L1160.3 102.9 L1161.5 106.8 L1162.6 118.4 L1163.8 125.1 L1164.9 128.0 L1165.7 124.5 L1166.9 129.9 L1168.0 133.8 L1169.6 136.7 L1170.7 135.3 L1171.9 137.2 L1173.4 138.0 L1174.2 126.1 L1175.3 111.0 L1176.5 110.3 L1177.3 116.4 L1178.4 130.9 L1180.0 131.5 L1181.1 129.9 L1182.3 133.8 L1183.4 134.7 L1184.2 127.0 L1185.0 127.6 L1186.1 132.8 L1187.7 134.7 L1189.6 135.7 L1191.5 136.7 L1193.4 134.7 L1194.6 135.7 L1195.8 134.7 L1196.9 136.7 L1198.5 137.6 L1200.0 139.2 L1201.9 138.0 L1203.9 139.2 L1205.8 140.5 L1207.7 139.9 L1209.6 140.5 L1211.6 141.1 L1213.5 139.6 L1215.4 139.9 L1216.6 140.0 L1217.7 139.2 L1218.9 138.3 L1220.0 137.6 L1222.0 139.6 L1223.1 139.6 L1224.3 139.9 L1225.4 139.7 L1226.6 140.5 L1228.5 141.1 L1230.4 138.6 L1231.6 138.1 L1232.8 137.2 L1234.7 136.1 L1236.2 133.4 L1237.8 131.9 L1239.3 131.5 L1241.2 133.4 L1242.8 137.2 L1244.7 139.6 L1245.9 139.4 L1247.0 140.5 L1248.2 139.4 L1249.3 139.6 L1251.3 141.1 L1252.4 140.1 L1253.6 139.9 L1255.5 138.6 L1256.6 134.7 L1257.8 129.9 L1259.0 125.1 L1260.1 118.4 L1261.3 116.4 L1262.4 113.5 L1263.6 105.8 L1264.4 102.9 L1265.1 106.8 L1265.9 115.5 L1267.1 123.2 L1268.2 129.9 L1269.4 132.8 L1270.1 134.7 L1270.9 120.3 L1271.7 110.7 L1272.8 104.9 L1273.6 104.5 L1274.8 110.7 L1275.5 122.2 L1276.7 108.7 L1277.8 108.3 L1279.0 111.6 L1280.5 114.5 L1281.7 119.3 L1282.9 126.1 L1284.0 128.0 L1285.2 126.5 L1286.3 127.6 L1287.5 126.5 L1288.6 127.6 L1289.8 123.8 L1290.6 123.2 L1291.7 129.0 L1292.9 122.2 L1293.6 121.8 L1294.8 131.9 L1296.0 133.8 L1296.7 131.5 L1298.3 134.7 L1299.8 137.6 L1301.3 139.2 L1303.3 139.6 L1305.2 140.5 L1307.1 139.9 L1309.1 141.5 L1311.0 139.9 L1312.9 140.5 L1314.1 139.6 L1315.2 139.6 L1316.4 139.5 L1317.5 139.9 L1319.5 140.5 L1321.4 139.9 L1323.3 141.1 L1324.5 141.1 L1325.6 142.4 L1327.6 141.1 L1328.7 139.6 L1329.9 141.5 L1331.8 139.9 L1333.7 139.2 L1334.9 138.0 L1336.0 139.9 L1337.6 141.1 L1339.1 139.6 L1339.9 131.9 L1340.7 130.3 L1341.4 133.8 L1342.6 140.5 L1344.5 139.9 L1345.7 141.9 L1347.2 142.4 L1348.7 140.5 L1350.7 141.1 L1352.6 141.5 L1354.5 142.4 L1355.3 133.8 L1356.1 112.6 L1356.8 112.2 L1357.6 120.3 L1358.8 131.9 L1359.9 133.8 L1361.1 135.3 L1361.8 128.0 L1363.0 127.0 L1363.8 133.8 L1364.5 126.1 L1365.3 125.7 L1366.1 120.3 L1366.9 117.4 L1367.6 116.8 L1368.8 124.1 L1369.6 122.2 L1370.7 129.9 L1371.9 135.3 L1372.6 124.1 L1373.4 118.4 L1374.2 119.3 L1375.0 116.4 L1376.1 116.1 L1377.3 124.1 L1378.4 133.8 L1379.6 126.1 L1380.3 125.1 L1381.5 129.9 L1382.3 134.7 L1383.0 129.5 L1383.8 129.0 L1384.6 137.6 L1386.5 138.6 L1388.4 138.0 L1390.4 139.2 L1392.3 138.6 L1394.2 139.2 L1396.1 138.0 L1397.3 136.7 L1398.1 124.1 L1398.8 123.2 L1399.4 123.2 L1400.9 121.3 L1402.4 118.4 L1403.6 115.5 L1404.8 114.5 L1405.9 115.5 L1406.7 114.1 L1407.8 117.4 L1409.0 119.3 L1410.2 121.8 L1411.3 122.2 L1412.1 126.1 L1412.8 122.2 L1414.0 121.8 L1414.8 128.0 L1415.9 134.7 L1417.9 133.8 L1419.8 133.4 L1420.6 126.1 L1421.3 119.9 L1422.5 121.3 L1423.6 129.0 L1424.4 132.8 L1425.2 123.2 L1426.0 122.2 L1427.1 129.9 L1428.3 125.1 L1429.4 123.2 L1430.6 125.1 L1431.3 129.9 L1432.1 123.2 L1432.9 122.6 L1433.7 130.9 L1434.8 127.0 L1436.0 128.0 L1436.7 125.1 L1437.5 130.9 L1438.3 122.2 L1439.1 121.8 L1440.2 126.1 L1441.0 127.0 L1442.1 124.1" fill="none" stroke="#1d3222" stroke-width="1" stroke-linejoin="round" shape-rendering="crispEdges"/></svg>
    </div>
    <div id="playhead"></div>
    <div id="cliplabel">Scene1_2015-05-04_11.42.05_T001_CharlieDia</div>
      <svg class="tm" style="left:158px" width="9" height="10" viewBox="0 0 9 10"><path d="M1.3 0.5 H7.7 Q8.5 0.5 8.5 1.3 V5.4 L4.5 9.5 L0.5 5.4 V1.3 Q0.5 0.5 1.3 0.5 Z" fill="url(#mkg)" stroke="#0d0f10" stroke-width="1"/></svg>
      <svg class="tm" style="left:426px" width="9" height="10" viewBox="0 0 9 10"><path d="M1.3 0.5 H7.7 Q8.5 0.5 8.5 1.3 V5.4 L4.5 9.5 L0.5 5.4 V1.3 Q0.5 0.5 1.3 0.5 Z" fill="url(#mkg)" stroke="#0d0f10" stroke-width="1"/></svg>
      <svg class="tm" style="left:725px" width="9" height="10" viewBox="0 0 9 10"><path d="M1.3 0.5 H7.7 Q8.5 0.5 8.5 1.3 V5.4 L4.5 9.5 L0.5 5.4 V1.3 Q0.5 0.5 1.3 0.5 Z" fill="url(#mkg)" stroke="#0d0f10" stroke-width="1"/></svg>
      <svg class="tm" style="left:989px" width="9" height="10" viewBox="0 0 9 10"><path d="M1.3 0.5 H7.7 Q8.5 0.5 8.5 1.3 V5.4 L4.5 9.5 L0.5 5.4 V1.3 Q0.5 0.5 1.3 0.5 Z" fill="url(#mkg)" stroke="#0d0f10" stroke-width="1"/></svg>
      <svg class="tm" style="left:1153px" width="9" height="10" viewBox="0 0 9 10"><path d="M1.3 0.5 H7.7 Q8.5 0.5 8.5 1.3 V5.4 L4.5 9.5 L0.5 5.4 V1.3 Q0.5 0.5 1.3 0.5 Z" fill="url(#mkg)" stroke="#0d0f10" stroke-width="1"/></svg>
  </div>
  <div id="splitter"><div id="grip"></div></div>
  <div id="header">
    <div class="hc" style="left:6px;width:654px;border-left:none"><span>Name</span></div>
    <div class="hc" style="left:660px;width:123px"><span>Notes</span></div>
    <div class="hc hsel" style="left:783px;width:204px"><span>Date Imported</span><svg id="sort" width="7" height="6.5" viewBox="0 0 7 6.5"><path d="M0 0 H7 L3.5 6.5 Z" fill="#1f3866"/></svg></div>
    <div class="hc" style="left:986px;width:203px"><span>Content Created</span></div>
    <div class="hc" style="left:1189px;width:158px"><span>Roles</span></div>
    <div class="hc" style="left:1347px;width:113px"><span>Duration</span></div>
    <div class="hc" style="left:1460px;width:11px"><span>S</span></div>
  </div>
  <div id="list">
<div class="row even" style="top:0px"><svg class="tri" width="9" height="8" viewBox="0 0 9 8"><path d="M0 0 H9 L4.5 8 Z" fill="#7b7b7b"/></svg><svg class="spk" width="7.6" height="12.6" viewBox="0 0 7.6 12.6"><path d="M0 3.9 H2.8 L7.4 0 V12.6 L2.8 8.7 H0 Z" fill="url(#spg)"/></svg><span class="nm clipnm">Scene1_2015-05-04_11.49.24_T002_CharlieDia</span><span class="c date">May 4, 2015, 11:56:13 AM</span><span class="c created">May 4, 2015, 11:54:33 AM</span><span class="c role">Charlie Dia</span><svg class="dd" width="7.5" height="6" viewBox="0 0 7.5 6"><path d="M0 0 H7.5 L3.75 6 Z" fill="#7d7d7d"/></svg><span class="c dur">00:00:16:36</span></div>
<div class="row odd" style="top:24px"><svg class="mk" width="10.4" height="11.6" viewBox="0 0 10.4 11.6"><path d="M1.5 0 H8.9 Q10.4 0 10.4 1.5 V6.4 L5.9 11.2 Q5.2 11.8 4.5 11.2 L0 6.4 V1.5 Q0 0 1.5 0 Z" fill="url(#mkg)"/></svg><span class="nm marknm" style="letter-spacing:0.57px">line start</span><span class="c dur">00:00:00:00</span></div>
<div class="row even" style="top:48px"><svg class="mk" width="10.4" height="11.6" viewBox="0 0 10.4 11.6"><path d="M1.5 0 H8.9 Q10.4 0 10.4 1.5 V6.4 L5.9 11.2 Q5.2 11.8 4.5 11.2 L0 6.4 V1.5 Q0 0 1.5 0 Z" fill="url(#mkg)"/></svg><span class="nm marknm" style="letter-spacing:0.58px">cut this out</span><span class="c dur">00:00:00:00</span></div>
<div class="row odd" style="top:72px"><svg class="mk" width="10.4" height="11.6" viewBox="0 0 10.4 11.6"><path d="M1.5 0 H8.9 Q10.4 0 10.4 1.5 V6.4 L5.9 11.2 Q5.2 11.8 4.5 11.2 L0 6.4 V1.5 Q0 0 1.5 0 Z" fill="url(#mkg)"/></svg><span class="nm marknm" style="letter-spacing:0.58px">cut this out</span><span class="c dur">00:00:00:00</span></div>
<div class="row even" style="top:96px"><svg class="tri" width="9" height="8" viewBox="0 0 9 8"><path d="M0 0 H9 L4.5 8 Z" fill="#7b7b7b"/></svg><svg class="spk" width="7.6" height="12.6" viewBox="0 0 7.6 12.6"><path d="M0 3.9 H2.8 L7.4 0 V12.6 L2.8 8.7 H0 Z" fill="url(#spg)"/></svg><span class="nm clipnm">Scene1_2015-05-04_11.42.05_T001_CharlieDia</span><span class="c date">May 4, 2015, 11:56:13 AM</span><span class="c created">May 4, 2015, 11:54:26 AM</span><span class="c role">Charlie Dia</span><svg class="dd" width="7.5" height="6" viewBox="0 0 7.5 6"><path d="M0 0 H7.5 L3.75 6 Z" fill="#7d7d7d"/></svg><span class="c dur">00:00:12:58</span></div>
<div class="row odd sel" style="top:120px"><svg class="mk" width="10.4" height="11.6" viewBox="0 0 10.4 11.6"><path d="M1.5 0 H8.9 Q10.4 0 10.4 1.5 V6.4 L5.9 11.2 Q5.2 11.8 4.5 11.2 L0 6.4 V1.5 Q0 0 1.5 0 Z" fill="url(#mkg)"/></svg><span class="nm marknm" style="letter-spacing:0.45px">start</span><span class="c dur">00:00:00:00</span></div>
<div class="row even" style="top:144px"><svg class="mk" width="10.4" height="11.6" viewBox="0 0 10.4 11.6"><path d="M1.5 0 H8.9 Q10.4 0 10.4 1.5 V6.4 L5.9 11.2 Q5.2 11.8 4.5 11.2 L0 6.4 V1.5 Q0 0 1.5 0 Z" fill="url(#mkg)"/></svg><span class="nm marknm" style="letter-spacing:0.14px">dia line 1</span><span class="c dur">00:00:00:00</span></div>
<div class="row odd" style="top:168px"><svg class="mk" width="10.4" height="11.6" viewBox="0 0 10.4 11.6"><path d="M1.5 0 H8.9 Q10.4 0 10.4 1.5 V6.4 L5.9 11.2 Q5.2 11.8 4.5 11.2 L0 6.4 V1.5 Q0 0 1.5 0 Z" fill="url(#mkg)"/></svg><span class="nm marknm" style="letter-spacing:0.58px">cut this out</span><span class="c dur">00:00:00:00</span></div>
<div class="row even" style="top:192px"><svg class="mk" width="10.4" height="11.6" viewBox="0 0 10.4 11.6"><path d="M1.5 0 H8.9 Q10.4 0 10.4 1.5 V6.4 L5.9 11.2 Q5.2 11.8 4.5 11.2 L0 6.4 V1.5 Q0 0 1.5 0 Z" fill="url(#mkg)"/></svg><span class="nm marknm" style="letter-spacing:0.58px">cut this out</span><span class="c dur">00:00:00:00</span></div>
<div class="row odd" style="top:216px"><svg class="mk" width="10.4" height="11.6" viewBox="0 0 10.4 11.6"><path d="M1.5 0 H8.9 Q10.4 0 10.4 1.5 V6.4 L5.9 11.2 Q5.2 11.8 4.5 11.2 L0 6.4 V1.5 Q0 0 1.5 0 Z" fill="url(#mkg)"/></svg><span class="nm marknm" style="letter-spacing:0.58px">cut this out</span><span class="c dur">00:00:00:00</span></div>
<div class="row even" style="top:240px"></div>
<div class="row odd" style="top:264px"></div>
    <div class="vl" style="left:660px"></div>
    <div class="vl" style="left:783px"></div>
    <div class="vl" style="left:986px"></div>
    <div class="vl" style="left:1189px"></div>
    <div class="vl" style="left:1347px"></div>
    <div class="vl" style="left:1460px"></div>
  </div>
  <div id="leftstrip"><div id="leftthumb"></div></div>
  <div id="hscroll"><div id="hthumb"></div></div>
</div>
</body>
</html>
